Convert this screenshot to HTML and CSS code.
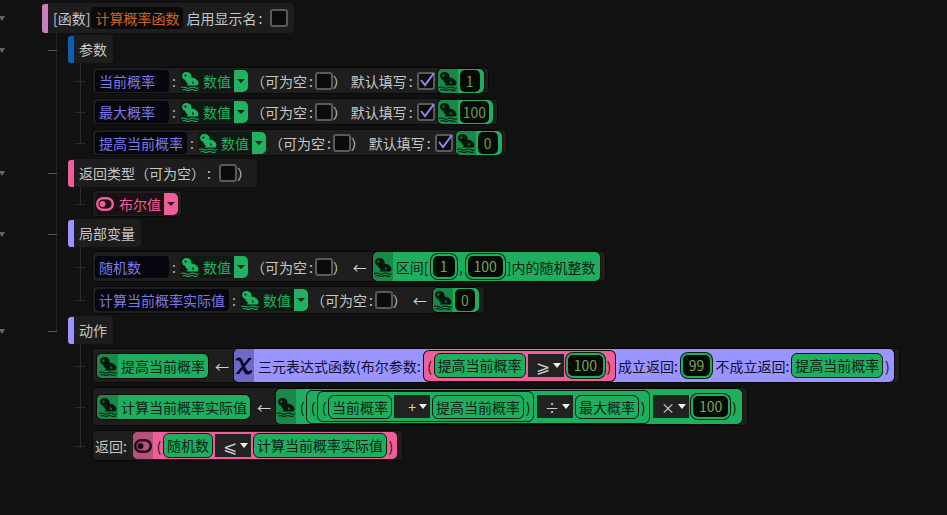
FILE: index.html
```html
<!DOCTYPE html>
<html lang="zh">
<head>
<meta charset="utf-8">
<title>函数</title>
<link rel="stylesheet" href="styles.css">
</head>
<body>
<svg class="defs" width="0" height="0">
  <symbol id="toad" viewBox="0 0 20 20">
    <path fill-rule="evenodd" d="M2 5.500Q2 1 6.500 1 10.500 1 11.500 4.500L11.500 6.500Q17 7 18.500 11.500 18.500 14 17 14.500H6.500L8 12.800Q5.500 11 5 8.700 2.500 8 2 5.500ZM5.500 3.400a1.100 1.100 0 1 0 .01 0ZM12 10Q14 10.500 14 12.500L12.500 12.800Z"/>
    <path d="M1 16.600q2-1.200 4.500 0t4.500 0 4.500 0 4.500 0M2.500 19q2-1 3.800 0t3.700 0 3.800 0 3.700 0" fill="none" stroke="currentColor" stroke-width="1.100"/>
  </symbol>
  <symbol id="eye" viewBox="0 0 18 14">
    <rect x="1.200" y="1.200" width="15.600" height="11.600" rx="5.800" fill="none" stroke="currentColor" stroke-width="2.400"/>
    <circle cx="6.500" cy="7" r="3" fill="currentColor"/>
  </symbol>
  <symbol id="chi" viewBox="0 0 20 20">
    <path d="M1.500 3.500Q3 1 5.500 1.500 8 2 9 5.500l2 5q1 3.500 3 4.500 2 .5 3.500-1l1 .8Q17 18.500 14 18.500q-3.500 0-5-4.500L7 8.500Q6 5 4.500 4.500 3.500 4 2.500 4.800z"/>
    <path d="M14.500 2h3.500l-6 7-1.500 2L5 18H1.500l6.500-7.500 1.500-2z"/>
  </symbol>
</svg>

<main class="tree">
  <div class="node root-node">
    <span class="arrow"></span>
    <div class="block block-root"><i class="bar bar-fn"></i>
      <span class="txt">[函数]</span>
      <span class="name name-fn">计算概率函数</span>
      <span class="txt">启用显示名<span class="tight-wide">:</span></span>
      <span class="check"></span>
    </div>
  </div>

  <div class="sections">
    <section class="section">
      <span class="arrow"></span>
      <div class="block block-head"><i class="bar bar-blue"></i><span class="txt">参数</span></div>
      <div class="rows">
        <div class="row row-param"><span class="name name-w74">当前概率</span><span class="colon">:</span>
          <span class="type"><svg class="ico"><use href="#toad"/></svg><span class="type-label">数值</span><span class="drop"></span></span>
          <span class="txt paren">（可为空<span class="tight">:</span></span><span class="check"></span><span class="txt close">）</span>
          <span class="txt def">默认填写<span class="tight">:</span></span><span class="check on"><svg viewBox="0 0 18 18" class="tick"><path d="M3 9l4 5 9-12"/></svg></span>
          <span class="chip val-chip"><span class="seg"><svg class="ico"><use href="#toad"/></svg></span><span class="num">1</span></span>
        </div>
        <div class="row row-param"><span class="name name-w74">最大概率</span><span class="colon">:</span>
          <span class="type"><svg class="ico"><use href="#toad"/></svg><span class="type-label">数值</span><span class="drop"></span></span>
          <span class="txt paren">（可为空<span class="tight">:</span></span><span class="check"></span><span class="txt close">）</span>
          <span class="txt def">默认填写<span class="tight">:</span></span><span class="check on"><svg viewBox="0 0 18 18" class="tick"><path d="M3 9l4 5 9-12"/></svg></span>
          <span class="chip val-chip"><span class="seg"><svg class="ico"><use href="#toad"/></svg></span><span class="num">100</span></span>
        </div>
        <div class="row row-param"><span class="name">提高当前概率</span><span class="colon">:</span>
          <span class="type"><svg class="ico"><use href="#toad"/></svg><span class="type-label">数值</span><span class="drop"></span></span>
          <span class="txt paren">（可为空<span class="tight">:</span></span><span class="check"></span><span class="txt close">）</span>
          <span class="txt def">默认填写<span class="tight">:</span></span><span class="check on"><svg viewBox="0 0 18 18" class="tick"><path d="M3 9l4 5 9-12"/></svg></span>
          <span class="chip val-chip"><span class="seg"><svg class="ico"><use href="#toad"/></svg></span><span class="num">0</span></span>
        </div>
      </div>
    </section>

    <section class="section sec-ret">
      <span class="arrow"></span>
      <div class="block block-head block-ret"><i class="bar bar-pink"></i><span class="txt">返回类型（可为空）<span class="tight-wide">:</span></span><span class="check"></span><span class="txt">）</span></div>
      <div class="rows rows-single">
        <div class="row row-bool"><span class="type type-bool"><svg class="ico ico-eye"><use href="#eye"/></svg><span class="type-label">布尔值</span><span class="drop"></span></span></div>
      </div>
    </section>

    <section class="section">
      <span class="arrow"></span>
      <div class="block block-head"><i class="bar bar-purple"></i><span class="txt">局部变量</span></div>
      <div class="rows">
        <div class="row row-local"><span class="name name-w74">随机数</span><span class="colon">:</span>
          <span class="type"><svg class="ico"><use href="#toad"/></svg><span class="type-label">数值</span><span class="drop"></span></span>
          <span class="txt paren">（可为空<span class="tight">:</span></span><span class="check"></span><span class="txt close">）</span>
          <span class="left-arrow">←</span>
          <span class="chip expr"><span class="seg"><svg class="ico"><use href="#toad"/></svg></span><span class="dk dk-range">区间[</span><span class="lit">1</span><span class="dk comma">,</span><span class="lit">100</span><span class="dk dk-end">]内的随机整数</span></span>
        </div>
        <div class="row row-local2"><span class="name">计算当前概率实际值</span><span class="colon">:</span>
          <span class="type"><svg class="ico"><use href="#toad"/></svg><span class="type-label">数值</span><span class="drop"></span></span>
          <span class="txt paren">（可为空<span class="tight">:</span></span><span class="check"></span><span class="txt close">）</span>
          <span class="left-arrow">←</span>
          <span class="chip val-chip val-after-arrow"><span class="seg"><svg class="ico"><use href="#toad"/></svg></span><span class="num">0</span></span>
        </div>
      </div>
    </section>

    <section class="section">
      <span class="arrow"></span>
      <div class="block block-head"><i class="bar bar-purple"></i><span class="txt">动作</span></div>
      <div class="rows">
        <div class="row row-act row-act1">
          <span class="chip var-icon"><span class="seg"><svg class="ico"><use href="#toad"/></svg></span><span class="dk">提高当前概率</span></span>
          <span class="left-arrow">←</span>
          <span class="chip expr-purple"><span class="seg seg-purple"><svg class="ico"><use href="#chi"/></svg></span>
            <span class="dk dk-fn dk-first">三元表达式函数(布尔参数:</span>
            <span class="chip bool-expr"><span class="dk po">(</span><span class="pill">提高当前概率</span><span class="op"><span class="cmp">⩾</span><i class="op-caret"></i></span><span class="lit">100</span><span class="dk po">)</span></span>
            <span class="dk dk-fn">成立返回:</span><span class="lit lit-gap">99</span><span class="dk dk-fn">不成立返回:</span><span class="pill pill-gap">提高当前概率</span><span class="dk po">)</span>
          </span>
        </div>
        <div class="row row-act row-act2">
          <span class="chip var-icon"><span class="seg"><svg class="ico"><use href="#toad"/></svg></span><span class="dk">计算当前概率实际值</span></span>
          <span class="left-arrow">←</span>
          <span class="chip expr-big"><span class="seg"><svg class="ico"><use href="#toad"/></svg></span><span class="dk po po-first">(</span>
            <span class="group g1"><span class="dk po">(</span>
              <span class="group g2"><span class="dk po">(</span><span class="pill">当前概率</span><span class="op">+<i class="op-caret"></i></span><span class="pill">提高当前概率</span><span class="dk po">)</span></span>
              <span class="op op-after">÷<i class="op-caret"></i></span><span class="pill">最大概率</span><span class="dk po">)</span>
            </span>
            <span class="op op-after">×<i class="op-caret"></i></span><span class="lit">100</span><span class="dk po">)</span>
          </span>
        </div>
        <div class="row row-ret"><span class="txt">返回:</span>
          <span class="chip expr-pink"><span class="seg seg-pink"><svg class="ico ico-eye"><use href="#eye"/></svg></span><span class="dk po po-first">(</span><span class="pill">随机数</span><span class="op"><span class="cmp">⩽</span><i class="op-caret"></i></span><span class="pill">计算当前概率实际值</span><span class="dk po">)</span></span>
        </div>
      </div>
    </section>
  </div>
</main>
</body>
</html>
```

FILE: styles.css
```css
* { box-sizing: border-box; }
html, body { margin: 0; height: 100%; }
body {
  background: #111111;
  color: #c6c6c6;
  font-family: "Noto Sans CJK SC", "Noto Sans", sans-serif;
  font-size: 14px;
  line-height: 20px;
  overflow: hidden;
}
.defs { position: absolute; }
.tree { padding: 3px 0 0 42px; position: relative; }
.node { position: relative; height: 30px; }

.arrow {
  position: absolute;
  width: 0; height: 0;
  border-left: 3px solid transparent;
  border-right: 3px solid transparent;
  border-top: 5px solid #666;
}
.root-node > .arrow { left: -43px; top: 13px; }
.section > .arrow { left: -69px; top: 15px; }

.block {
  display: inline-flex;
  align-items: center;
  background: #1d1d1d;
  border-radius: 4px;
  position: relative;
}
.block-root { height: 30px; padding: 0 6px 0 11px; width: 252px; vertical-align: top; }
.block-head { height: 28px; padding: 0 6px 0 11px; vertical-align: top; }
.bar { position: absolute; left: 0; top: 1px; bottom: 0; width: 6px; border-radius: 3px 0 0 3px; }
.bar-fn { background: #c77fbe; }
.bar-blue { background: #0b5fb3; }
.bar-pink { background: #ee5f9a; }
.bar-purple { background: #9a94ff; }

.txt { white-space: nowrap; }
.tight { margin: 0 2px; }
.tight-wide { margin: 0 8px 0 2px; }
.name {
  background: #06060e;
  color: #7c78e6;
  border-radius: 4px;
  height: 22px;
  padding: 0 4px;
  white-space: nowrap;
  line-height: 22px;
}
.name-w74 { width: 74px; }
.name-fn { color: #d2641e; background: #0a0a0a; margin: 0 3px 0 1px; }

.check {
  width: 18px; height: 18px;
  background: #0b0b0b;
  border: 2px solid #5a5a5a;
  border-radius: 3px;
  display: inline-block;
  flex: none;
  position: relative;
}
.tick { position: absolute; left: -1px; top: -3px; width: 18px; height: 18px; overflow: visible; }
.tick path { fill: none; stroke: #8d88f5; stroke-width: 2; }

.sections {
  position: relative;
  margin-left: 14px;
  padding-left: 12px;
  display: flex;
  flex-direction: column;
}
.sections::before {
  content: "";
  position: absolute;
  left: 0; top: 0; bottom: 130px;
  width: 1px;
  background: #242424;
}
.section { position: relative; padding-top: 2px; }
.sec-ret { padding-top: 3px; }
.section::before {
  content: "";
  position: absolute;
  left: -20px; top: 17px;
  width: 9px; height: 1px;
  background: #555;
}

.rows {
  position: relative;
  margin-left: 24px;
  padding-top: 4px;
  display: flex;
  flex-direction: column;
  gap: 4px;
}
.rows::before {
  content: "";
  position: absolute;
  left: -12px; top: 0; bottom: 13px;
  width: 1px;
  background: #2c2c2c;
}
.rows-single { padding-top: 3px; }
.row {
  display: inline-flex;
  width: max-content;
  align-items: center;
  background: #1e1e1e;
  border: 1px solid #090909;
  border-radius: 4px;
  padding: 0 5px 0 2px;
  position: relative;
  white-space: nowrap;
}
.row::before {
  content: "";
  position: absolute;
  left: -18px; top: 50%;
  width: 10px; height: 1px;
  background: #2c2c2c;
}
.row-param { height: 27px; padding-right: 4px; }
.row-bool { height: 27px; padding-right: 3px; }
.row-local { height: 31px; }
.row-local2 { height: 28px; }
.row-act { padding-left: 4px; }
.row-act1 { height: 35px; }
.row-act2 { height: 39px; }
.row-ret { height: 31px; }

.colon { margin: 0 4px 0 3px; color: #b0b0b0; }
.type {
  display: inline-flex;
  align-items: center;
  background: #0f1a14;
  color: #22b163;
  border-radius: 4px;
  height: 22px;
}
.type-label { margin-left: 3px; }
.ico { width: 20px; height: 20px; fill: currentColor; flex: none; }
.drop {
  width: 14px; height: 22px;
  background: #22b163;
  border-radius: 0 5px 5px 0;
  margin-left: 3px;
  position: relative;
}
.drop::after {
  content: "";
  position: absolute;
  left: 3px; top: 9px;
  border-left: 4px solid transparent;
  border-right: 4px solid transparent;
  border-top: 4px solid #0b2a17;
}
.type-bool { color: #ee5f9a; background: #1b1015; padding-left: 1px; }
.type-bool .type-label { margin-left: 5px; }
.type-bool .drop { background: #ee5f9a; }
.type-bool .drop::after { border-top-color: #3a0b1e; }
.ico-eye { width: 18px; height: 14px; }

.paren { margin-left: 3px; }
.close { margin-right: 4px; }
.def { margin-right: 2px; }
.left-arrow { font-size: 14px; color: #d0d0d0; margin: 0 5px 0 7px; line-height: 20px; }
.row-local .left-arrow, .row-local2 .left-arrow { margin: 0 6px 0 2px; }

.chip { display: inline-flex; align-items: center; border-radius: 5px; flex: none; }
.seg {
  display: inline-flex; align-items: center; justify-content: center;
  align-self: stretch;
  width: 20px;
  background: #178a49;
  color: #03180b;
  border-radius: 5px 0 0 5px;
  flex: none;
}
.seg-purple { background: #6e69c8; color: #0a0a28; }
.seg-pink { background: #b94f7e; color: #1a0510; }
.dk { color: #071f11; white-space: nowrap; }
.dk-fn { color: #100f33; margin-left: 3px; }
.dk-first { margin-left: 4px; }
.po { display: inline-block; width: 8px; text-align: center; flex: none; }
.po-first { margin-left: 2px; }
.val-chip {
  background: #1fae60;
  height: 24px;
  box-shadow: 0 0 0 1px #070707;
  padding-right: 4px;
  color: #000;
  margin-left: 3px;
}
.val-after-arrow { margin-left: 0; }
.num {
  background: #050a06;
  color: #6f9a4e;
  border-radius: 5px;
  height: 22px;
  line-height: 22px;
  margin-left: 2px;
  padding: 0 3px;
  min-width: 20px;
  text-align: center;
}
.lit {
  background: #050a06;
  color: #7aa553;
  border-radius: 7px;
  height: 25px;
  line-height: 21px;
  padding: 0 6px;
  min-width: 26px;
  text-align: center;
  border: 2px solid #1fae60;
  box-shadow: 0 0 0 1px #07200f;
  flex: none;
}
.lit-gap { margin-left: 3px; }
.expr {
  background: #1fae60; height: 29px; box-shadow: 0 0 0 1px #070707; padding-right: 4px;
}
.dk-range { margin: 0 2px 0 3px; }
.comma { width: 9px; text-align: center; display: inline-block; }
.dk-end { margin-left: 2px; }
.var-icon {
  background: #1fae60; height: 24px; box-shadow: 0 0 0 1px #070707; padding-right: 3px;
}
.var-icon .seg { width: 21px; }
.var-icon .dk { margin-left: 3px; }
.pill {
  background: #1fae60;
  color: #071f11;
  border: 1px solid #0c1a10;
  border-radius: 6px;
  height: 25px;
  line-height: 22px;
  padding: 0 3px;
  flex: none;
}
.pill-gap { margin-left: 2px; }
.group .pill { height: 24px; }
.op {
  background: #222;
  color: #cfcfcf;
  height: 23px;
  width: 36px;
  display: inline-flex;
  align-items: center;
  justify-content: flex-end;
  padding-right: 3px;
  gap: 3px;
  margin: 0 2px;
  flex: none;
}
.cmp { font-size: 17px; }
.op-after { margin-left: 3px; }
.op-caret {
  border-left: 4px solid transparent;
  border-right: 4px solid transparent;
  border-top: 5px solid #eee;
}
.expr-purple {
  background: #9a94ff; height: 33px; padding-right: 3px; box-shadow: 0 0 0 1px #070707;
}
.bool-expr {
  background: #ee5f9a; height: 30px; padding: 0 2px; box-shadow: 0 0 0 1px #170710; margin-left: 3px;
}
.expr-big { background: #1fae60; height: 35px; box-shadow: 0 0 0 1px #070707; padding-right: 4px; }
.group {
  display: inline-flex; align-items: center;
  background: #1fae60;
  border: 1px solid #0c1a10;
  border-radius: 6px;
  padding-left: 2px;
  flex: none;
}
.g1 { height: 34px; padding-right: 2px; }
.g2 { height: 31px; padding-right: 1px; }
.expr-pink { background: #ee5f9a; height: 27px; padding-right: 2px; margin-left: 6px; }
.expr-pink .op { box-shadow: 0 0 0 1px #ee5f9a; }
```
